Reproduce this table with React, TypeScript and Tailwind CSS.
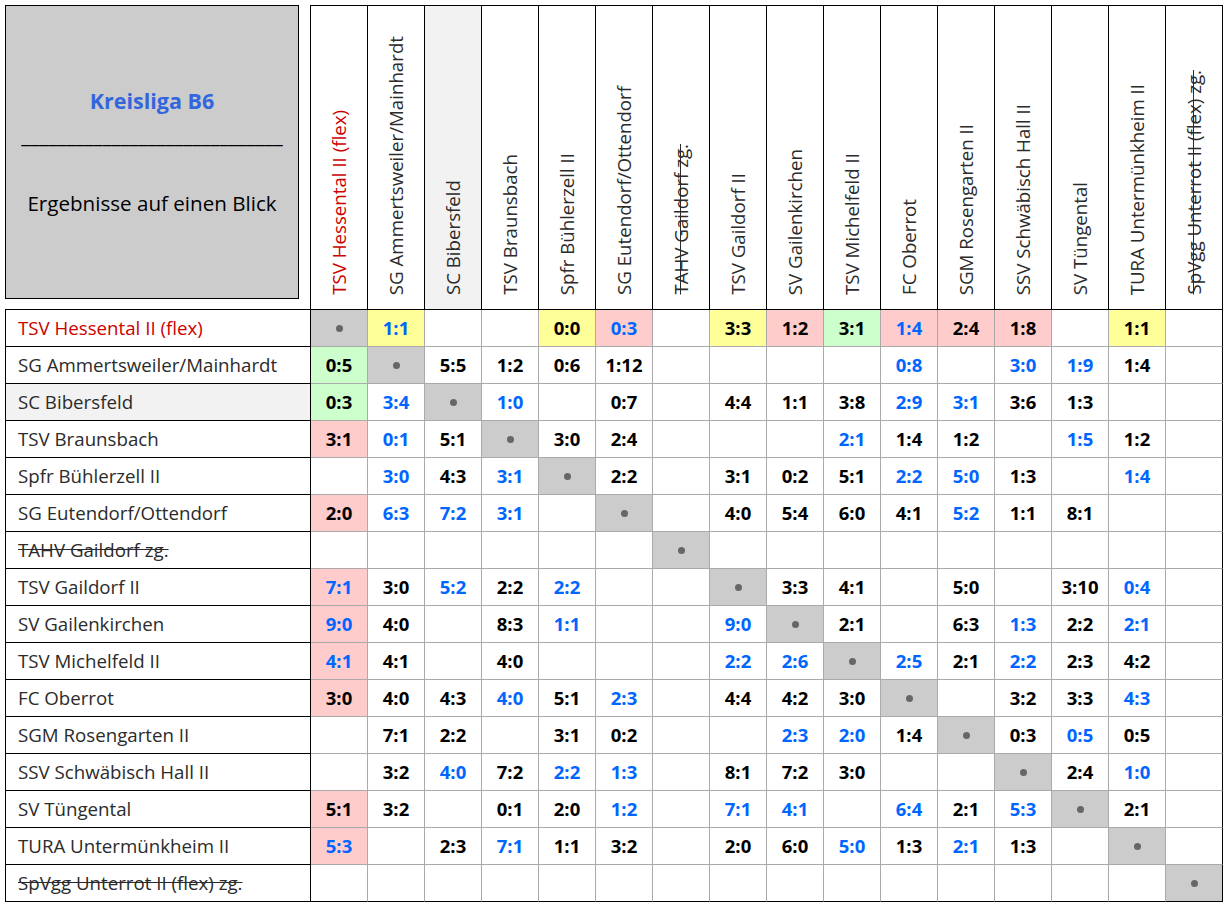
import React from "react";

const teams = [
  "TSV Hessental II (flex)",
  "SG Ammertsweiler/Mainhardt",
  "SC Bibersfeld",
  "TSV Braunsbach",
  "Spfr Bühlerzell II",
  "SG Eutendorf/Ottendorf",
  "TAHV Gaildorf zg.",
  "TSV Gaildorf II",
  "SV Gailenkirchen",
  "TSV Michelfeld II",
  "FC Oberrot",
  "SGM Rosengarten II",
  "SSV Schwäbisch Hall II",
  "SV Tüngental",
  "TURA Untermünkheim II",
  "SpVgg Unterrot II (flex) zg.",
];

const rows = [
  ". 1:1by - - 0:0y 0:3bp - 3:3y 1:2p 3:1g 1:4bp 2:4p 1:8p - 1:1y -",
  "0:5g . 5:5 1:2 0:6 1:12 - - - - 0:8b - 3:0b 1:9b 1:4 -",
  "0:3g 3:4b . 1:0b - 0:7 - 4:4 1:1 3:8 2:9b 3:1b 3:6 1:3 - -",
  "3:1p 0:1b 5:1 . 3:0 2:4 - - - 2:1b 1:4 1:2 - 1:5b 1:2 -",
  "- 3:0b 4:3 3:1b . 2:2 - 3:1 0:2 5:1 2:2b 5:0b 1:3 - 1:4b -",
  "2:0p 6:3b 7:2b 3:1b - . - 4:0 5:4 6:0 4:1 5:2b 1:1 8:1 - -",
  "- - - - - - . - - - - - - - - -",
  "7:1bp 3:0 5:2b 2:2 2:2b - - . 3:3 4:1 - 5:0 - 3:10 0:4b -",
  "9:0bp 4:0 - 8:3 1:1b - - 9:0b . 2:1 - 6:3 1:3b 2:2 2:1b -",
  "4:1bp 4:1 - 4:0 - - - 2:2b 2:6b . 2:5b 2:1 2:2b 2:3 4:2 -",
  "3:0p 4:0 4:3 4:0b 5:1 2:3b - 4:4 4:2 3:0 . - 3:2 3:3 4:3b -",
  "- 7:1 2:2 - 3:1 0:2 - - 2:3b 2:0b 1:4 . 0:3 0:5b 0:5 -",
  "- 3:2 4:0b 7:2 2:2b 1:3b - 8:1 7:2 3:0 - - . 2:4 1:0b -",
  "5:1p 3:2 - 0:1 2:0 1:2b - 7:1b 4:1b - 6:4b 2:1 5:3b . 2:1 -",
  "5:3bp - 2:3 7:1b 1:1 3:2 - 2:0 6:0 5:0b 1:3 2:1b 1:3 - . -",
  "- - - - - - - - - - - - - - - .",
];

function teamClass(i: number) {
  if (i === 0) return "text-[#cc0000]";
  if (i === 6 || i === 15) return "text-[#2b2b2b] line-through";
  return "text-[#2b2b2b]";
}

function Cell({ token, last, lastRow }: { token: string; last: boolean; lastRow: boolean }) {
  const m = token.match(/^([\d:]+)([a-z]*)$/);
  const score = m ? m[1] : "";
  const flags = m ? m[2] : "";
  let bg = "bg-white";
  if (token === ".") bg = "bg-[#cccccc]";
  else if (flags.includes("y")) bg = "bg-[#ffff99]";
  else if (flags.includes("p")) bg = "bg-[#ffcccc]";
  else if (flags.includes("g")) bg = "bg-[#ccffcc]";
  const color = flags.includes("b") ? "text-[#0066ff]" : "text-black";
  const br = last ? "border-r-black" : "border-r-[#aaaaaa]";
  const bb = lastRow ? "border-b-black" : "border-b-[#aaaaaa]";
  return (
    <div className={`flex items-center justify-center border-r border-b ${br} ${bb} ${bg}`}>
      {token === "." ? (
        <span className="block h-[7px] w-[7px] rounded-full bg-[#666666]" />
      ) : score ? (
        <span className={`text-[18.5px] font-bold leading-none ${color}`}>{score}</span>
      ) : null}
    </div>
  );
}

export default function App() {
  return (
    <div className="min-h-screen bg-white pl-[5px] pt-[5px] font-['Open_Sans','Noto_Sans',sans-serif]">
      <div className="grid grid-cols-[306px_repeat(16,57px)] grid-rows-[305px_repeat(16,37px)]">
        {/* corner */}
        <div className="border-r border-b border-black">
          <div className="flex h-[294px] w-[294px] flex-col items-center justify-center border border-black bg-[#cccccc] text-center">
            <div className="h-[34px] whitespace-nowrap text-[21.5px] font-bold leading-[34px] text-[#3366dd]">Kreisliga B6</div>
            <div className="h-[34px] overflow-hidden whitespace-nowrap text-[20.6px] leading-[34px] text-black">_____________________________</div>
            <div className="h-[34px]" />
            <div className="h-[34px] whitespace-nowrap text-[20.6px] leading-[34px] text-black">Ergebnisse auf einen Blick</div>
          </div>
        </div>
        {teams.map((t, i) => (
          <div
            key={"h" + i}
            className={`flex items-end justify-center border-t border-r border-b border-black pb-[14px] ${i === 2 ? "bg-[#f2f2f2]" : "bg-white"}`}
          >
            <span className={`[writing-mode:vertical-rl] rotate-180 whitespace-nowrap text-[18.7px] leading-[24px] ${teamClass(i)}`}>
              {t}
            </span>
          </div>
        ))}
        {rows.map((r, ri) => {
          const toks = r.split(" ");
          return (
            <React.Fragment key={"r" + ri}>
              <div
                className={`flex items-center border-l border-r border-b border-black pl-[12px] ${ri === 2 ? "bg-[#f2f2f2]" : "bg-white"}`}
              >
                <span className={`whitespace-nowrap text-[18.7px] leading-none ${teamClass(ri)}`}>{teams[ri]}</span>
              </div>
              {toks.map((tk, ci) => (
                <Cell key={ci} token={tk} last={ci === 15} lastRow={ri === 15} />
              ))}
            </React.Fragment>
          );
        })}
      </div>
    </div>
  );
}
